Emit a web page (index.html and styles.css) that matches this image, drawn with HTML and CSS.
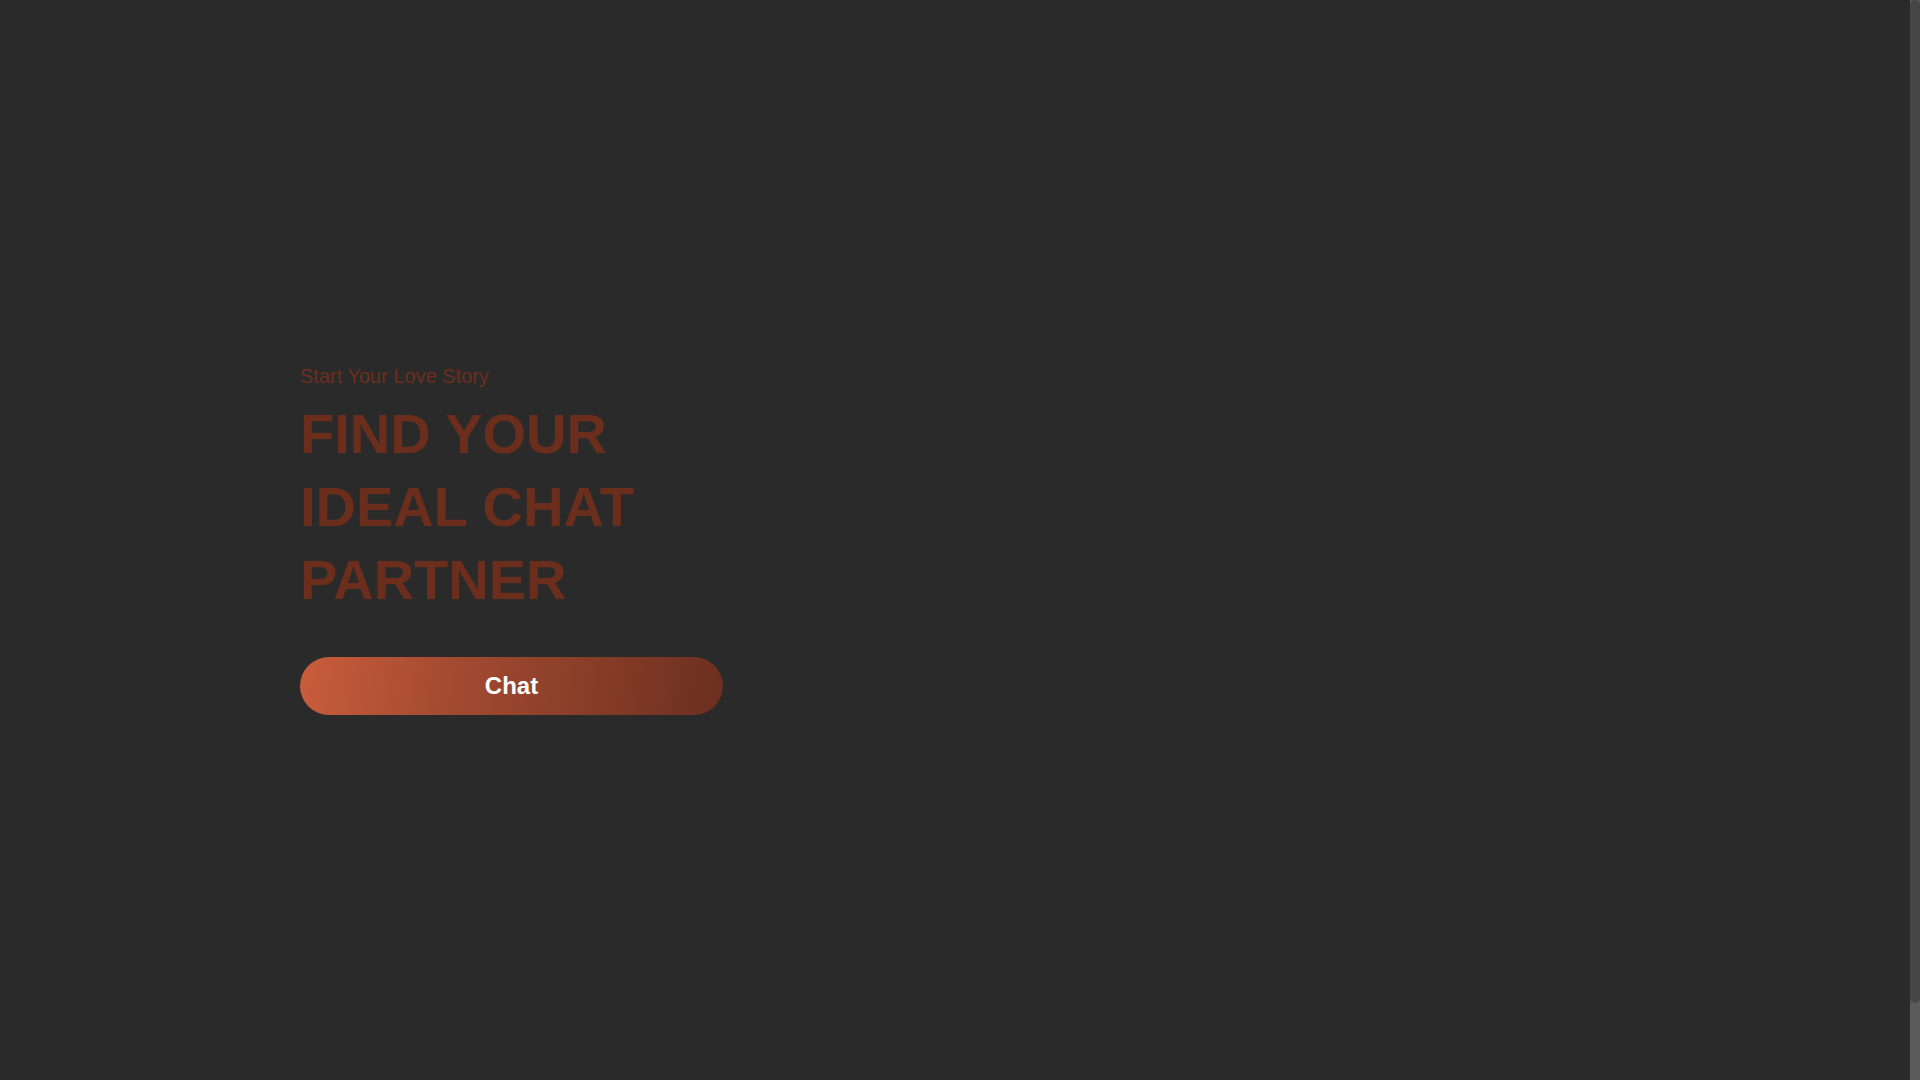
FILE: index.html
```html
<!DOCTYPE html>
<html lang="en">
<head>
<meta charset="utf-8">
<title>Find Your Ideal Chat Partner</title>
<link rel="stylesheet" href="styles.css">
</head>
<body>
<div class="frame">
  <main class="page">
    <section class="hero">
      <p class="hero-kicker">Start Your Love Story</p>
      <h1 class="hero-title">FIND YOUR<br>IDEAL CHAT<br>PARTNER</h1>
      <button class="hero-button" type="button">Chat</button>
    </section>
  </main>
  <div class="scrollbar" aria-hidden="true">
    <div class="scrollbar-thumb"></div>
  </div>
</div>
</body>
</html>
```

FILE: styles.css
```css
html, body {
  height: 100%;
  margin: 0;
  overflow: hidden;
  background: #2a2a2a;
}
body {
  font-family: "Liberation Sans", Arial, sans-serif;
}
.frame {
  display: flex;
  height: 100vh;
}
.page {
  flex: 1;
  box-sizing: border-box;
  padding: 365px 0 0 300px;
}
.scrollbar {
  width: 10px;
  background: #5b5b5b;
  display: flex;
  flex-direction: column;
}
.scrollbar-thumb {
  height: 1003px;
  background: #464646;
  border-radius: 5px;
}
.hero {
  display: flex;
  flex-direction: column;
  align-items: flex-start;
}
.hero-kicker {
  margin: 0;
  font-size: 20px;
  line-height: 23px;
  color: #6b2f1e;
}
.hero-title {
  margin: 9px 0 0;
  font-size: 56px;
  line-height: 73px;
  font-weight: 700;
  color: #6b2e1d;
}
.hero-button {
  margin-top: 41px;
  width: 423px;
  height: 58px;
  border: 0;
  border-radius: 29px;
  background: linear-gradient(100deg, #c95d3b 0%, #a44b31 35%, #6b2f1f 100%);
  color: #ffffff;
  font-family: "Liberation Sans", Arial, sans-serif;
  font-size: 24px;
  font-weight: 700;
  cursor: pointer;
}
```
